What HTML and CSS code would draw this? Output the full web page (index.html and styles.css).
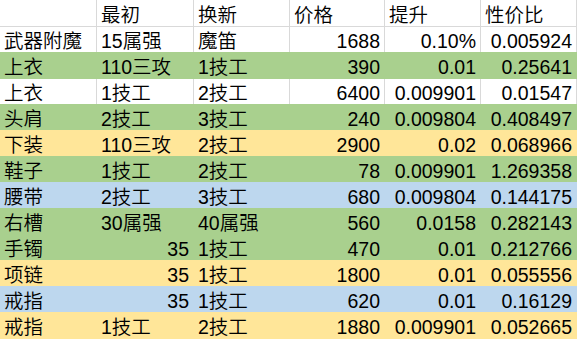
FILE: index.html
```html
<!DOCTYPE html>
<html lang="zh">
<head>
<meta charset="utf-8">
<title>性价比</title>
<link rel="stylesheet" href="styles.css">
</head>
<body>
<div class="sheet">
  <div class="row head">
    <div class="c"></div><div class="c">最初</div><div class="c">换新</div><div class="c">价格</div><div class="c">提升</div><div class="c">性价比</div>
  </div>
  <div class="row">
    <div class="c">武器附魔</div><div class="c">15属强</div><div class="c">魔笛</div><div class="c r">1688</div><div class="c r">0.10%</div><div class="c r">0.005924</div>
  </div>
  <div class="row g">
    <div class="c">上衣</div><div class="c">110三攻</div><div class="c">1技工</div><div class="c r">390</div><div class="c r">0.01</div><div class="c r">0.25641</div>
  </div>
  <div class="row">
    <div class="c">上衣</div><div class="c">1技工</div><div class="c">2技工</div><div class="c r">6400</div><div class="c r">0.009901</div><div class="c r">0.01547</div>
  </div>
  <div class="row g">
    <div class="c">头肩</div><div class="c">2技工</div><div class="c">3技工</div><div class="c r">240</div><div class="c r">0.009804</div><div class="c r">0.408497</div>
  </div>
  <div class="row y">
    <div class="c">下装</div><div class="c">110三攻</div><div class="c">2技工</div><div class="c r">2900</div><div class="c r">0.02</div><div class="c r">0.068966</div>
  </div>
  <div class="row g">
    <div class="c">鞋子</div><div class="c">1技工</div><div class="c">2技工</div><div class="c r">78</div><div class="c r">0.009901</div><div class="c r">1.269358</div>
  </div>
  <div class="row b">
    <div class="c">腰带</div><div class="c">2技工</div><div class="c">3技工</div><div class="c r">680</div><div class="c r">0.009804</div><div class="c r">0.144175</div>
  </div>
  <div class="row g">
    <div class="c">右槽</div><div class="c">30属强</div><div class="c">40属强</div><div class="c r">560</div><div class="c r">0.0158</div><div class="c r">0.282143</div>
  </div>
  <div class="row g">
    <div class="c">手镯</div><div class="c r">35</div><div class="c">1技工</div><div class="c r">470</div><div class="c r">0.01</div><div class="c r">0.212766</div>
  </div>
  <div class="row y">
    <div class="c">项链</div><div class="c r">35</div><div class="c">1技工</div><div class="c r">1800</div><div class="c r">0.01</div><div class="c r">0.055556</div>
  </div>
  <div class="row b">
    <div class="c">戒指</div><div class="c r">35</div><div class="c">1技工</div><div class="c r">620</div><div class="c r">0.01</div><div class="c r">0.16129</div>
  </div>
  <div class="row y">
    <div class="c">戒指</div><div class="c">1技工</div><div class="c">2技工</div><div class="c r">1880</div><div class="c r">0.009901</div><div class="c r">0.052665</div>
  </div>
</div>
</body>
</html>
```
FILE: styles.css
```css
html, body {
  margin: 0;
  padding: 0;
  background: #ffffff;
}

.sheet {
  width: 577px;
  height: 339px;
  overflow: hidden;
  font-family: "Liberation Sans", "Noto Sans CJK SC", sans-serif;
  font-size: 19.5px;
  font-weight: 350;
  color: #000000;
}

.row {
  --line: #d9d9d9;
  display: grid;
  grid-template-columns: 97px 97px 96px 95px 96px 96px;
  grid-template-rows: 25px;
  height: 26px;
  box-sizing: border-box;
  border-bottom: 1px solid var(--line);
  background: #ffffff;
}

.row.head {
  grid-template-rows: 26px;
  height: 27px;
}

.c {
  box-sizing: border-box;
  border-right: 1px solid var(--line);
  padding: 0 4px;
  line-height: 28px;
  white-space: nowrap;
  overflow: visible;
  text-align: left;
}

.head .c {
  line-height: 30px;
}

.c.r {
  text-align: right;
}

.row.g {
  --line: #a9d08e;
  background: #a9d08e;
  box-shadow: 0 -1px 0 #a9d08e;
}

.row.y {
  --line: #ffe699;
  background: #ffe699;
  box-shadow: 0 -1px 0 #ffe699;
}

.row.b {
  --line: #bdd7ee;
  background: #bdd7ee;
  box-shadow: 0 -1px 0 #bdd7ee;
}
```
